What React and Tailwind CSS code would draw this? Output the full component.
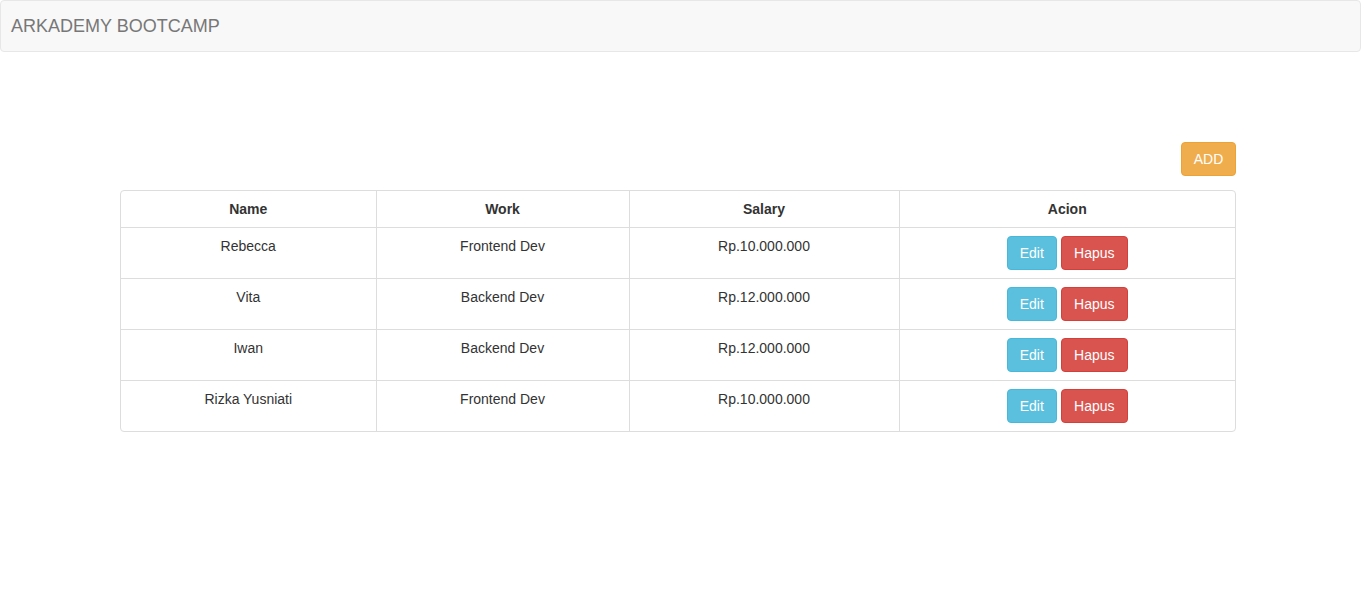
import React from 'react';

const rows = [
  { name: 'Rebecca', work: 'Frontend Dev', salary: 'Rp.10.000.000' },
  { name: 'Vita', work: 'Backend Dev', salary: 'Rp.12.000.000' },
  { name: 'Iwan', work: 'Backend Dev', salary: 'Rp.12.000.000' },
  { name: 'Rizka Yusniati', work: 'Frontend Dev', salary: 'Rp.10.000.000' },
];

export default function App() {
  return (
    <div className="min-h-screen bg-white text-[14px] leading-[20px] text-[#333] font-['Liberation_Sans',Arial,sans-serif]">
      {/* navbar */}
      <nav className="h-[52px] bg-[#f8f8f8] border border-[#e7e7e7] rounded-[4px] flex items-center">
        <span className="pl-[10px] text-[18px] text-[#777]">ARKADEMY BOOTCAMP</span>
      </nav>

      <div className="ml-[120px] w-[1116px] pt-[90px]">
        <div className="flex justify-end">
          <button className="h-[34px] w-[55px] rounded-[4px] bg-[#f0ad4e] border border-[#eea236] text-white text-[14px]">
            ADD
          </button>
        </div>

        <div className="mt-[14px] border border-[#ddd] rounded-[4px] overflow-hidden">
          <table className="w-full border-collapse">
            <thead>
              <tr>
                <th className="w-[255px] h-[36px] px-[8px] font-bold text-center border-r border-[#ddd]">Name</th>
                <th className="w-[253px] px-[8px] font-bold text-center border-r border-[#ddd]">Work</th>
                <th className="w-[270px] px-[8px] font-bold text-center border-r border-[#ddd]">Salary</th>
                <th className="px-[8px] font-bold text-center">Acion</th>
              </tr>
            </thead>
            <tbody>
              {rows.map((r, i) => (
                <tr key={i} className="border-t border-[#ddd]">
                  <td className="p-[8px] align-top text-center border-r border-[#ddd]">{r.name}</td>
                  <td className="p-[8px] align-top text-center border-r border-[#ddd]">{r.work}</td>
                  <td className="p-[8px] align-top text-center border-r border-[#ddd]">{r.salary}</td>
                  <td className="p-[8px] align-top">
                    <div className="flex justify-center gap-[4px]">
                      <button className="h-[34px] w-[50px] rounded-[4px] bg-[#5bc0de] border border-[#46b8da] text-white">Edit</button>
                      <button className="h-[34px] w-[67px] rounded-[4px] bg-[#d9534f] border border-[#d43f3a] text-white">Hapus</button>
                    </div>
                  </td>
                </tr>
              ))}
            </tbody>
          </table>
        </div>
      </div>
    </div>
  );
}
